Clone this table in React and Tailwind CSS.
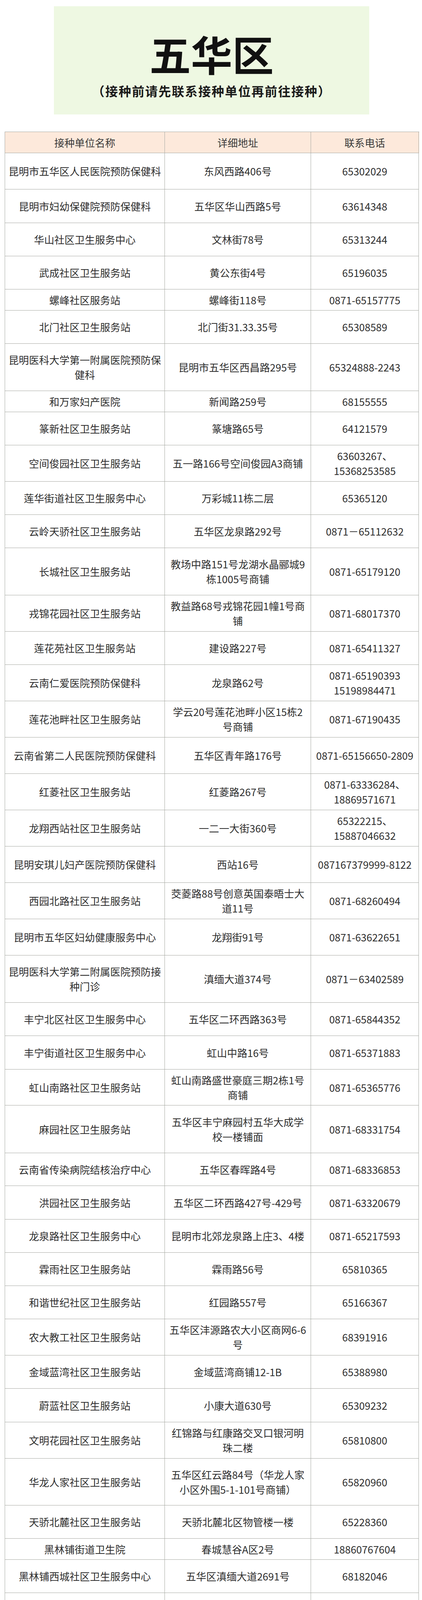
// 五华区 vaccination sites: green title card, then the three-column contact table.
const rows = [
  ["昆明市五华区人民医院预防保健科", "东风西路406号", "65302029", "h-[93px]"],
  ["昆明市妇幼保健院预防保健科", "五华区华山西路5号", "63614348", "h-[86px]"],
  ["华山社区卫生服务中心", "文林街78号", "65313244", "h-[85px]"],
  ["武成社区卫生服务站", "黄公东街4号", "65196035", "h-[85px]"],
  ["螺峰社区服务站", "螺峰街118号", "0871-65157775", "h-[54px]"],
  ["北门社区卫生服务站", "北门街31.33.35号", "65308589", "h-[85px]"],
  ["昆明医科大学第一附属医院预防保\n健科", "昆明市五华区西昌路295号", "65324888-2243", "h-[121px]"],
  ["和万家妇产医院", "新闻路259号", "68155555", "h-[54px]"],
  ["篆新社区卫生服务站", "篆塘路65号", "64121579", "h-[85px]"],
  ["空间俊园社区卫生服务站", "五一路166号空间俊园A3商铺", "63603267、\n15368253585", "h-[93px]"],
  ["莲华街道社区卫生服务中心", "万彩城11栋二层", "65365120", "h-[85px]"],
  ["云岭天骄社区卫生服务站", "五华区龙泉路292号", "0871－65112632", "h-[85px]"],
  ["长城社区卫生服务站", "教场中路151号龙湖水晶郦城9\n栋1005号商铺", "0871-65179120", "h-[121px]"],
  ["戎锦花园社区卫生服务站", "教益路68号戎锦花园1幢1号商\n铺", "0871-68017370", "h-[93px]"],
  ["莲花苑社区卫生服务站", "建设路227号", "0871-65411327", "h-[85px]"],
  ["云南仁爱医院预防保健科", "龙泉路62号", "0871-65190393\n15198984471", "h-[93px]"],
  ["莲花池畔社区卫生服务站", "学云20号莲花池畔小区15栋2\n号商铺", "0871-67190435", "h-[93px]"],
  ["云南省第二人民医院预防保健科", "五华区青年路176号", "0871-65156650-2809", "h-[93px]"],
  ["红菱社区卫生服务站", "红菱路267号", "0871-63336284、\n18869571671", "h-[93px]"],
  ["龙翔西站社区卫生服务站", "一二一大街360号", "65322215、\n15887046632", "h-[93px]"],
  ["昆明安琪儿妇产医院预防保健科", "西站16号", "087167379999-8122", "h-[93px]"],
  ["西园北路社区卫生服务站", "茭菱路88号创意英国泰晤士大\n道11号", "0871-68260494", "h-[93px]"],
  ["昆明市五华区妇幼健康服务中心", "龙翔街91号", "0871-63622651", "h-[93px]"],
  ["昆明医科大学第二附属医院预防接\n种门诊", "滇缅大道374号", "0871－63402589", "h-[121px]"],
  ["丰宁北区社区卫生服务中心", "五华区二环西路363号", "0871-65844352", "h-[85px]"],
  ["丰宁街道社区卫生服务中心", "虹山中路16号", "0871-65371883", "h-[86px]"],
  ["虹山南路社区卫生服务站", "虹山南路盛世豪庭三期2栋1号\n商铺", "0871-65365776", "h-[92px]"],
  ["麻园社区卫生服务站", "五华区丰宁麻园村五华大成学\n校一楼铺面", "0871-68331754", "h-[122px]"],
  ["云南省传染病院结核治疗中心", "五华区春晖路4号", "0871-68336853", "h-[84px]"],
  ["洪园社区卫生服务站", "五华区二环西路427号-429号", "0871-63320679", "h-[86px]"],
  ["龙泉路社区卫生服务中心", "昆明市北郊龙泉路上庄3、4楼", "0871-65217593", "h-[85px]"],
  ["霖雨社区卫生服务站", "霖雨路56号", "65810365", "h-[85px]"],
  ["和谐世纪社区卫生服务站", "红园路557号", "65166367", "h-[85px]"],
  ["农大教工社区卫生服务站", "五华区沣源路农大小区商网6-6\n号", "68391916", "h-[93px]"],
  ["金域蓝湾社区卫生服务站", "金域蓝湾商铺12-1B", "65388980", "h-[85px]"],
  ["蔚蓝社区卫生服务站", "小康大道630号", "65309232", "h-[86px]"],
  ["文明花园社区卫生服务站", "红锦路与红康路交叉口银河明\n珠二楼", "65810800", "h-[93px]"],
  ["华龙人家社区卫生服务站", "五华区红云路84号（华龙人家\n小区外围5-1-101号商铺）", "65820960", "h-[120px]"],
  ["天骄北麓社区卫生服务站", "天骄北麓北区物管楼一楼", "65228360", "h-[85px]"],
  ["黑林铺街道卫生院", "春城慧谷A区2号", "18860767604", "h-[54px]"],
  ["黑林铺西城社区卫生服务中心", "五华区滇缅大道2691号", "68182046", "h-[85px]"],
  ["龙院社区卫生服务站", "海源北路上峰新村2号商铺", "0871_68265688", "h-[86px]"],
  ["森林湖社区卫生服务站", "昭宗路100号", "68240090", "h-[85px]"],
  ["月半弯社区卫生服务站", "昆明市昌源北路334号月半弯小\n区1号商铺", "0871-68306708", "h-[120px]"],
  ["假日城市社区卫生服务站", "昌源中路假日城市小区9幢J-1-\n52-55号商铺", "67323394", "h-[121px]"],
  ["普吉街道社区卫生服务中心", "普吉路339号", "18987173404", "h-[84px]"],
  ["普吉景文社区卫生服务中心", "西城林语斓郡苑B区6栋4楼\n（景文社区党群服务中心四\n楼）", "18088445494", "h-[156px]"],
  ["普吉联家社区卫生服务中心", "普吉路205号", "0871-65371473", "h-[86px]"],
  ["王家桥社区卫生服务中心", "王家桥98号", "18812201335", "h-[85px]"],
  ["同心路社区卫生服务站", "同心路41号", "0871-68307647", "h-[85px]"],
  ["明日城市社区卫生服务站", "普吉路71号", "0871-65336992", "h-[85px]"],
  ["联想科技城社区卫生服务站", "大塘路1000号S3-8号商铺", "0871-65338701", "h-[85px]"],
  ["厂口社区卫生服务中心", "五华区西翥街道厂口社区高村3\n号", "0871-68407216", "h-[93px]"],
  ["沙朗社区卫生服务中心", "西翥街道办事处沙朗顺风村1号", "0871－68406645", "h-[85px]"],
  ["高新区北区社区卫生服务中心", "海源北路傲云峰小区1层商铺31\n-34号", "63586116", "h-[93px]"],
  ["高新区国际花园社区卫生服务站", "昆明市海源北路670，676号", "68264621", "h-[94px]"],
  ["高新区康桥社区卫生服务站", "科新路278号", "68338838", "h-[85px]"],
  ["高新区万裕社区卫生服务站", "昆明市科锦路111-115号", "68333959", "h-[85px]"],
  ["高新区沙沟尾社区卫生服务站", "昌源中路碧鸡花园AD10号商铺", "0871-68190697", "h-[85px]"],
  ["梁家河社区卫生服务站", "泰源路鑫苑别墅93栋", "68356155", "h-[86px]"],
  ["高新区红塔社区卫生服务站", "科医路26号", "68390401", "h-[85px]"],
];

function Cell({ text }) {
  return (
    <div className="flex flex-col items-center justify-center text-center overflow-hidden border-r border-b border-[#a7a9a3] px-1 leading-[38px]">
      {text.split("\n").map((ln, i) => (
        <span key={i} className="whitespace-nowrap">{ln}</span>
      ))}
    </div>
  );
}

export default function App() {
  return (
    <div className="h-[5990px] overflow-hidden bg-white pt-[16px] font-['Noto_Sans_CJK_SC','Noto_Sans',sans-serif] text-[#2e2e2e]">
      <div className="ml-[138px] w-[807px] h-[277px] bg-[#eef8e2] flex flex-col items-center pt-[67px]">
        <h1 className="text-[106px] leading-none font-bold text-[#111]">五华区</h1>
        <p className="mt-[27px] text-[32px] leading-none font-bold tracking-[2px] text-[#1a1a1a]">（接种前请先联系接种单位再前往接种）</p>
      </div>

      <div className="mt-[44px] ml-[12px] w-[1061px] border-l border-t border-[#a7a9a3] text-[26px]">
        <div className="grid grid-cols-[409px_374px_276px] h-[54px] bg-[#fde9db] text-[#3a3a3a]">
          <Cell text="接种单位名称" />
          <Cell text="详细地址" />
          <Cell text="联系电话" />
        </div>
        {rows.map(([name, addr, phone, h]) => (
          <div key={name} className={`grid grid-cols-[409px_374px_276px] ${h}`}>
            <Cell text={name} />
            <Cell text={addr} />
            <Cell text={phone} />
          </div>
        ))}
      </div>
    </div>
  );
}
